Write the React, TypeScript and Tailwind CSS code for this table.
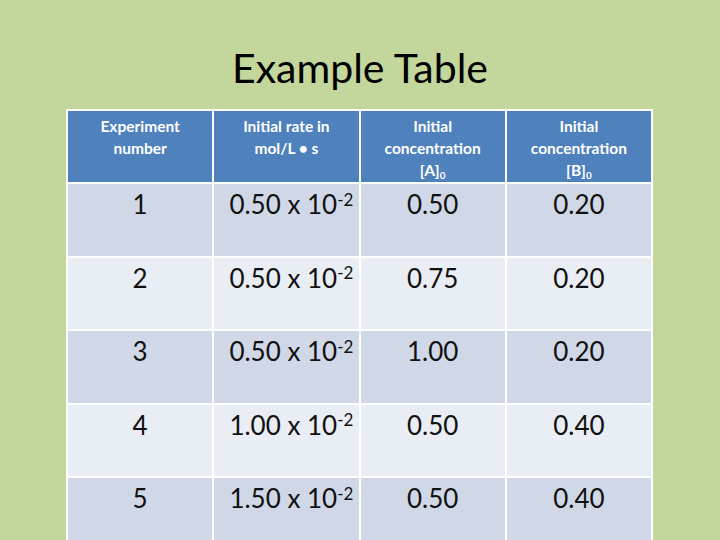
import React from 'react';

const rows = [
  { n: '1', rate: '0.50', a: '0.50', b: '0.20' },
  { n: '2', rate: '0.50', a: '0.75', b: '0.20' },
  { n: '3', rate: '0.50', a: '1.00', b: '0.20' },
  { n: '4', rate: '1.00', a: '0.50', b: '0.40' },
  { n: '5', rate: '1.50', a: '0.50', b: '0.40' },
];

export default function App() {
  return (
    <div
      className="w-[720px] h-[540px] overflow-hidden bg-[#c3d69b] flex flex-col items-center"
      style={{ fontFamily: 'Lato, "Open Sans", sans-serif' }}
    >
      <h1 className="mt-[41px] h-[56px] text-[41px] leading-[54px] text-black">Example Table</h1>
      <table className="mt-[14px] ml-[-1px] w-[587px] border-collapse table-fixed">
        <thead>
          <tr className="h-[73px] bg-[#4f81bd] text-white text-[15.5px] leading-[22px] align-top">
            <th className="border-2 border-white pt-[4px] font-bold">Experiment<br />number</th>
            <th className="border-2 border-white pt-[4px] font-bold">Initial rate in<br />mol/L • s</th>
            <th className="border-2 border-white pt-[4px] font-bold">
              Initial<br />concentration<br />[A]<sub className="text-[10px]">0</sub>
            </th>
            <th className="border-2 border-white pt-[4px] font-bold">
              Initial<br />concentration<br />[B]<sub className="text-[10px]">0</sub>
            </th>
          </tr>
        </thead>
        <tbody>
          {rows.map((r, i) => (
            <tr
              key={r.n}
              className={`h-[73.5px] align-top text-[26px] leading-[32px] text-[#111] ${i % 2 === 0 ? 'bg-[#d0d8e8]' : 'bg-[#e9edf4]'}`}
            >
              <td className="border-2 border-white text-center pt-[4px]">{r.n}</td>
              <td className="border-2 border-white text-center pt-[4px] pl-[10px]">
                {r.rate} x 10<sup className="text-[17px]">-2</sup>
              </td>
              <td className="border-2 border-white text-center pt-[4px]">{r.a}</td>
              <td className="border-2 border-white text-center pt-[4px]">{r.b}</td>
            </tr>
          ))}
        </tbody>
      </table>
    </div>
  );
}
